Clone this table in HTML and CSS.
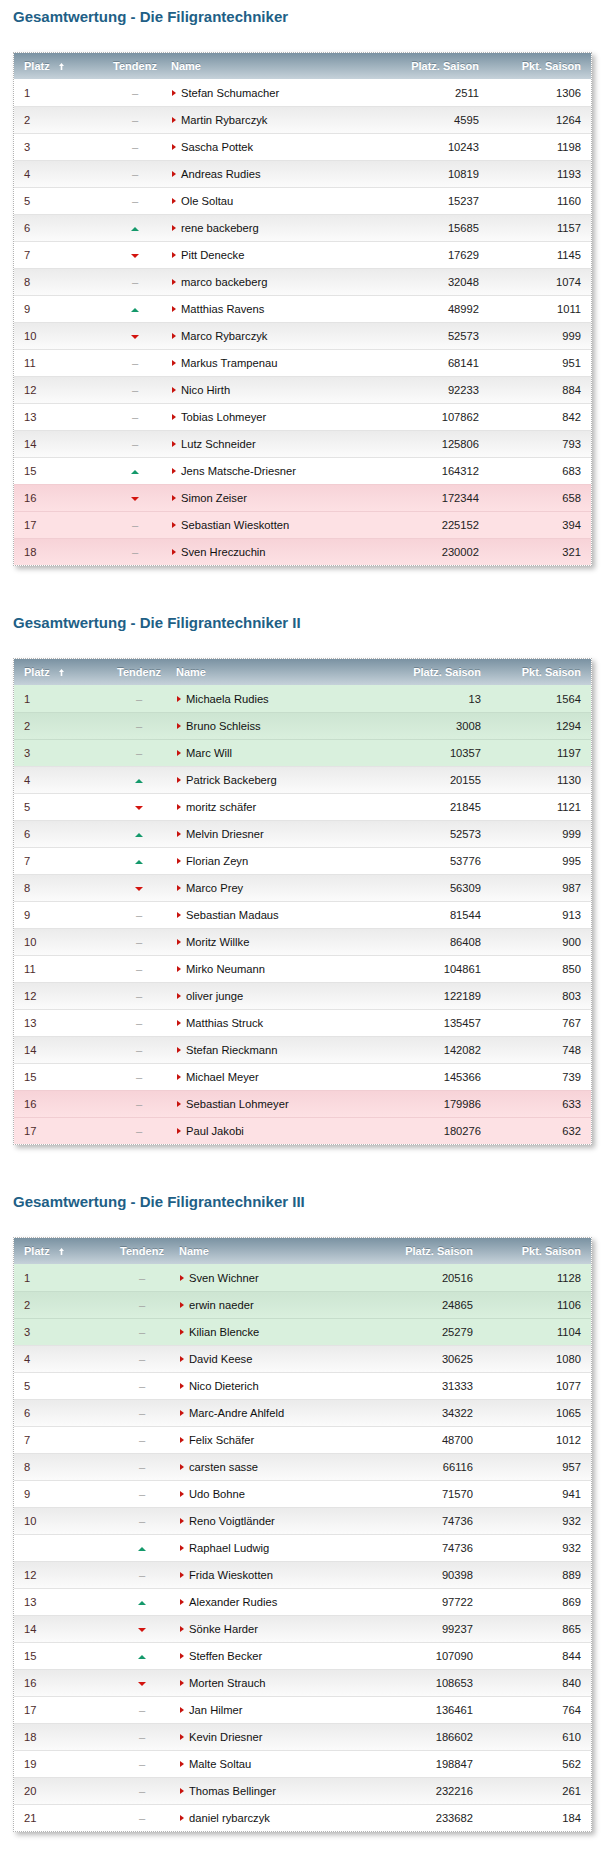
FILE: index.html
```html
<!DOCTYPE html>
<html lang="de">
<head>
<meta charset="utf-8">
<title>Gesamtwertung</title>
<link rel="stylesheet" href="styles.css">
</head>
<body>
<section class="block">
  <h2>Gesamtwertung - Die Filigrantechniker</h2>
  <div class="board t1">
    <div class="row head"><div class="c">Platz <svg class="sort" viewBox="0 0 5 7" width="5" height="7"><path d="M2.5 0 L5 3 H3.3 V7 H1.7 V3 H0 Z" fill="#fff"/></svg></div><div class="c ctr">Tendenz</div><div class="c">Name</div><div class="c r">Platz. Saison</div><div class="c r">Pkt. Saison</div></div>
    <div class="row"><div class="c pl">1</div><div class="c ctr"><span class="dash">–</span></div><div class="c nm">Stefan Schumacher</div><div class="c r">2511</div><div class="c r">1306</div></div>
    <div class="row"><div class="c pl">2</div><div class="c ctr"><span class="dash">–</span></div><div class="c nm">Martin Rybarczyk</div><div class="c r">4595</div><div class="c r">1264</div></div>
    <div class="row"><div class="c pl">3</div><div class="c ctr"><span class="dash">–</span></div><div class="c nm">Sascha Pottek</div><div class="c r">10243</div><div class="c r">1198</div></div>
    <div class="row"><div class="c pl">4</div><div class="c ctr"><span class="dash">–</span></div><div class="c nm">Andreas Rudies</div><div class="c r">10819</div><div class="c r">1193</div></div>
    <div class="row"><div class="c pl">5</div><div class="c ctr"><span class="dash">–</span></div><div class="c nm">Ole Soltau</div><div class="c r">15237</div><div class="c r">1160</div></div>
    <div class="row"><div class="c pl">6</div><div class="c ctr"><span class="up"></span></div><div class="c nm">rene backeberg</div><div class="c r">15685</div><div class="c r">1157</div></div>
    <div class="row"><div class="c pl">7</div><div class="c ctr"><span class="down"></span></div><div class="c nm">Pitt Denecke</div><div class="c r">17629</div><div class="c r">1145</div></div>
    <div class="row"><div class="c pl">8</div><div class="c ctr"><span class="dash">–</span></div><div class="c nm">marco backeberg</div><div class="c r">32048</div><div class="c r">1074</div></div>
    <div class="row"><div class="c pl">9</div><div class="c ctr"><span class="up"></span></div><div class="c nm">Matthias Ravens</div><div class="c r">48992</div><div class="c r">1011</div></div>
    <div class="row"><div class="c pl">10</div><div class="c ctr"><span class="down"></span></div><div class="c nm">Marco Rybarczyk</div><div class="c r">52573</div><div class="c r">999</div></div>
    <div class="row"><div class="c pl">11</div><div class="c ctr"><span class="dash">–</span></div><div class="c nm">Markus Trampenau</div><div class="c r">68141</div><div class="c r">951</div></div>
    <div class="row"><div class="c pl">12</div><div class="c ctr"><span class="dash">–</span></div><div class="c nm">Nico Hirth</div><div class="c r">92233</div><div class="c r">884</div></div>
    <div class="row"><div class="c pl">13</div><div class="c ctr"><span class="dash">–</span></div><div class="c nm">Tobias Lohmeyer</div><div class="c r">107862</div><div class="c r">842</div></div>
    <div class="row"><div class="c pl">14</div><div class="c ctr"><span class="dash">–</span></div><div class="c nm">Lutz Schneider</div><div class="c r">125806</div><div class="c r">793</div></div>
    <div class="row"><div class="c pl">15</div><div class="c ctr"><span class="up"></span></div><div class="c nm">Jens Matsche-Driesner</div><div class="c r">164312</div><div class="c r">683</div></div>
    <div class="row red"><div class="c pl">16</div><div class="c ctr"><span class="down"></span></div><div class="c nm">Simon Zeiser</div><div class="c r">172344</div><div class="c r">658</div></div>
    <div class="row red"><div class="c pl">17</div><div class="c ctr"><span class="dash">–</span></div><div class="c nm">Sebastian Wieskotten</div><div class="c r">225152</div><div class="c r">394</div></div>
    <div class="row red"><div class="c pl">18</div><div class="c ctr"><span class="dash">–</span></div><div class="c nm">Sven Hreczuchin</div><div class="c r">230002</div><div class="c r">321</div></div>
  </div>
</section>

<section class="block">
  <h2>Gesamtwertung - Die Filigrantechniker II</h2>
  <div class="board t2">
    <div class="row head"><div class="c">Platz <svg class="sort" viewBox="0 0 5 7" width="5" height="7"><path d="M2.5 0 L5 3 H3.3 V7 H1.7 V3 H0 Z" fill="#fff"/></svg></div><div class="c ctr">Tendenz</div><div class="c">Name</div><div class="c r">Platz. Saison</div><div class="c r">Pkt. Saison</div></div>
    <div class="row green"><div class="c pl">1</div><div class="c ctr"><span class="dash">–</span></div><div class="c nm">Michaela Rudies</div><div class="c r">13</div><div class="c r">1564</div></div>
    <div class="row green"><div class="c pl">2</div><div class="c ctr"><span class="dash">–</span></div><div class="c nm">Bruno Schleiss</div><div class="c r">3008</div><div class="c r">1294</div></div>
    <div class="row green"><div class="c pl">3</div><div class="c ctr"><span class="dash">–</span></div><div class="c nm">Marc Will</div><div class="c r">10357</div><div class="c r">1197</div></div>
    <div class="row"><div class="c pl">4</div><div class="c ctr"><span class="up"></span></div><div class="c nm">Patrick Backeberg</div><div class="c r">20155</div><div class="c r">1130</div></div>
    <div class="row"><div class="c pl">5</div><div class="c ctr"><span class="down"></span></div><div class="c nm">moritz schäfer</div><div class="c r">21845</div><div class="c r">1121</div></div>
    <div class="row"><div class="c pl">6</div><div class="c ctr"><span class="up"></span></div><div class="c nm">Melvin Driesner</div><div class="c r">52573</div><div class="c r">999</div></div>
    <div class="row"><div class="c pl">7</div><div class="c ctr"><span class="up"></span></div><div class="c nm">Florian Zeyn</div><div class="c r">53776</div><div class="c r">995</div></div>
    <div class="row"><div class="c pl">8</div><div class="c ctr"><span class="down"></span></div><div class="c nm">Marco Prey</div><div class="c r">56309</div><div class="c r">987</div></div>
    <div class="row"><div class="c pl">9</div><div class="c ctr"><span class="dash">–</span></div><div class="c nm">Sebastian Madaus</div><div class="c r">81544</div><div class="c r">913</div></div>
    <div class="row"><div class="c pl">10</div><div class="c ctr"><span class="dash">–</span></div><div class="c nm">Moritz Willke</div><div class="c r">86408</div><div class="c r">900</div></div>
    <div class="row"><div class="c pl">11</div><div class="c ctr"><span class="dash">–</span></div><div class="c nm">Mirko Neumann</div><div class="c r">104861</div><div class="c r">850</div></div>
    <div class="row"><div class="c pl">12</div><div class="c ctr"><span class="dash">–</span></div><div class="c nm">oliver junge</div><div class="c r">122189</div><div class="c r">803</div></div>
    <div class="row"><div class="c pl">13</div><div class="c ctr"><span class="dash">–</span></div><div class="c nm">Matthias Struck</div><div class="c r">135457</div><div class="c r">767</div></div>
    <div class="row"><div class="c pl">14</div><div class="c ctr"><span class="dash">–</span></div><div class="c nm">Stefan Rieckmann</div><div class="c r">142082</div><div class="c r">748</div></div>
    <div class="row"><div class="c pl">15</div><div class="c ctr"><span class="dash">–</span></div><div class="c nm">Michael Meyer</div><div class="c r">145366</div><div class="c r">739</div></div>
    <div class="row red"><div class="c pl">16</div><div class="c ctr"><span class="dash">–</span></div><div class="c nm">Sebastian Lohmeyer</div><div class="c r">179986</div><div class="c r">633</div></div>
    <div class="row red"><div class="c pl">17</div><div class="c ctr"><span class="dash">–</span></div><div class="c nm">Paul Jakobi</div><div class="c r">180276</div><div class="c r">632</div></div>
  </div>
</section>

<section class="block">
  <h2>Gesamtwertung - Die Filigrantechniker III</h2>
  <div class="board t3">
    <div class="row head"><div class="c">Platz <svg class="sort" viewBox="0 0 5 7" width="5" height="7"><path d="M2.5 0 L5 3 H3.3 V7 H1.7 V3 H0 Z" fill="#fff"/></svg></div><div class="c ctr">Tendenz</div><div class="c">Name</div><div class="c r">Platz. Saison</div><div class="c r">Pkt. Saison</div></div>
    <div class="row green"><div class="c pl">1</div><div class="c ctr"><span class="dash">–</span></div><div class="c nm">Sven Wichner</div><div class="c r">20516</div><div class="c r">1128</div></div>
    <div class="row green"><div class="c pl">2</div><div class="c ctr"><span class="dash">–</span></div><div class="c nm">erwin naeder</div><div class="c r">24865</div><div class="c r">1106</div></div>
    <div class="row green"><div class="c pl">3</div><div class="c ctr"><span class="dash">–</span></div><div class="c nm">Kilian Blencke</div><div class="c r">25279</div><div class="c r">1104</div></div>
    <div class="row"><div class="c pl">4</div><div class="c ctr"><span class="dash">–</span></div><div class="c nm">David Keese</div><div class="c r">30625</div><div class="c r">1080</div></div>
    <div class="row"><div class="c pl">5</div><div class="c ctr"><span class="dash">–</span></div><div class="c nm">Nico Dieterich</div><div class="c r">31333</div><div class="c r">1077</div></div>
    <div class="row"><div class="c pl">6</div><div class="c ctr"><span class="dash">–</span></div><div class="c nm">Marc-Andre Ahlfeld</div><div class="c r">34322</div><div class="c r">1065</div></div>
    <div class="row"><div class="c pl">7</div><div class="c ctr"><span class="dash">–</span></div><div class="c nm">Felix Schäfer</div><div class="c r">48700</div><div class="c r">1012</div></div>
    <div class="row"><div class="c pl">8</div><div class="c ctr"><span class="dash">–</span></div><div class="c nm">carsten sasse</div><div class="c r">66116</div><div class="c r">957</div></div>
    <div class="row"><div class="c pl">9</div><div class="c ctr"><span class="dash">–</span></div><div class="c nm">Udo Bohne</div><div class="c r">71570</div><div class="c r">941</div></div>
    <div class="row"><div class="c pl">10</div><div class="c ctr"><span class="dash">–</span></div><div class="c nm">Reno Voigtländer</div><div class="c r">74736</div><div class="c r">932</div></div>
    <div class="row"><div class="c pl"></div><div class="c ctr"><span class="up"></span></div><div class="c nm">Raphael Ludwig</div><div class="c r">74736</div><div class="c r">932</div></div>
    <div class="row"><div class="c pl">12</div><div class="c ctr"><span class="dash">–</span></div><div class="c nm">Frida Wieskotten</div><div class="c r">90398</div><div class="c r">889</div></div>
    <div class="row"><div class="c pl">13</div><div class="c ctr"><span class="up"></span></div><div class="c nm">Alexander Rudies</div><div class="c r">97722</div><div class="c r">869</div></div>
    <div class="row"><div class="c pl">14</div><div class="c ctr"><span class="down"></span></div><div class="c nm">Sönke Harder</div><div class="c r">99237</div><div class="c r">865</div></div>
    <div class="row"><div class="c pl">15</div><div class="c ctr"><span class="up"></span></div><div class="c nm">Steffen Becker</div><div class="c r">107090</div><div class="c r">844</div></div>
    <div class="row"><div class="c pl">16</div><div class="c ctr"><span class="down"></span></div><div class="c nm">Morten Strauch</div><div class="c r">108653</div><div class="c r">840</div></div>
    <div class="row"><div class="c pl">17</div><div class="c ctr"><span class="dash">–</span></div><div class="c nm">Jan Hilmer</div><div class="c r">136461</div><div class="c r">764</div></div>
    <div class="row"><div class="c pl">18</div><div class="c ctr"><span class="dash">–</span></div><div class="c nm">Kevin Driesner</div><div class="c r">186602</div><div class="c r">610</div></div>
    <div class="row"><div class="c pl">19</div><div class="c ctr"><span class="dash">–</span></div><div class="c nm">Malte Soltau</div><div class="c r">198847</div><div class="c r">562</div></div>
    <div class="row"><div class="c pl">20</div><div class="c ctr"><span class="dash">–</span></div><div class="c nm">Thomas Bellinger</div><div class="c r">232216</div><div class="c r">261</div></div>
    <div class="row"><div class="c pl">21</div><div class="c ctr"><span class="dash">–</span></div><div class="c nm">daniel rybarczyk</div><div class="c r">233682</div><div class="c r">184</div></div>
  </div>
</section>
</body>
</html>
```

FILE: styles.css
```css
html, body {
  margin: 0;
  background: #fff;
}
body {
  padding: 8px 13px 0;
  font-family: "Liberation Sans", Arial, Helvetica, sans-serif;
}
.block {
  margin-bottom: 48px;
}
h2 {
  margin: 0 0 26px;
  font-size: 15px;
  line-height: 18px;
  font-weight: bold;
  color: #215f86;
}
.board {
  width: 579px;
  box-sizing: border-box;
  border: 1px dotted #b3b3b3;
  box-shadow: 3px 3px 5px rgba(0, 0, 0, 0.28);
  background: #fff;
}
.t1 { --cols: 95px 52px 228px 100px 102px; }
.t2 { --cols: 98px 54px 225px 100px 100px; }
.t3 { --cols: 101px 54px 214px 100px 108px; }
.row {
  display: grid;
  grid-template-columns: var(--cols);
  align-items: center;
  height: 27px;
  box-sizing: border-box;
  border-top: 1px solid #e3e3e3;
  font-size: 11.2px;
  color: #222;
  background: #fff;
}
.row:nth-child(odd) {
  background: linear-gradient(#ebebeb, #fbfbfb);
}
.row.head {
  height: 26px;
  border-top: 0;
  background: linear-gradient(#7a92a2, #c6d2da);
  color: #fff;
  font-size: 11px;
  font-weight: bold;
  text-shadow: 0 -1px 0 rgba(40, 60, 75, 0.35);
}
.row.head + .row {
  border-top: 0;
}
.row.red {
  background: #fde1e4;
  border-top-color: #f1cdd2;
}
.row.red:nth-child(odd) {
  background: linear-gradient(#f7d3d8, #fde1e4);
}
.row.green {
  background: #d9f0dd;
  border-top-color: #c6ddcb;
}
.row.green:nth-child(odd) {
  background: linear-gradient(#cde5d2, #d9efdd);
}
.c {
  padding: 0 10px;
  white-space: nowrap;
  overflow: hidden;
}
.r { text-align: right; }
.ctr {
  padding: 0;
  text-align: center;
  overflow: visible;
}
.pl { color: #4e2b2b; }
.sort {
  margin-left: 6px;
  vertical-align: 0;
}
.nm {
  display: flex;
  align-items: center;
  color: #111;
}
.nm::before {
  content: "";
  display: block;
  flex: none;
  width: 0;
  height: 0;
  margin-left: 1px;
  margin-right: 5px;
  border-left: 4px solid #c8130e;
  border-top: 3px solid transparent;
  border-bottom: 3px solid transparent;
}
.dash {
  color: #a3a3a3;
}
.up, .down {
  display: inline-block;
  width: 0;
  height: 0;
  border-left: 4px solid transparent;
  border-right: 4px solid transparent;
  vertical-align: middle;
}
.up {
  border-bottom: 4px solid #14996b;
}
.down {
  border-top: 4px solid #d3140f;
}
```
